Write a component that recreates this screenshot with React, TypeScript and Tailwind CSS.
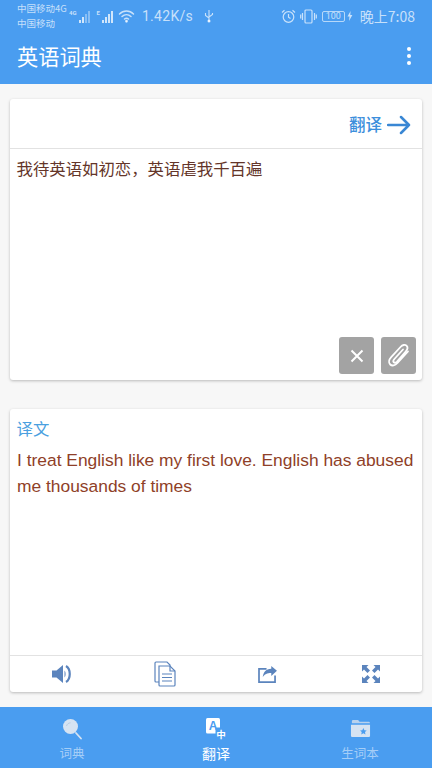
import React from 'react';

const cjk = { fontFamily: '"Noto Sans CJK SC", "Liberation Sans", sans-serif' };

function Bars({ label, faded }: { label: string; faded?: boolean }) {
  const heights = [3, 6, 9, 12];
  return (
    <div className="flex items-end gap-[1.5px] h-[14px]">
      <span className="text-[6px] leading-[8px] self-start font-bold text-white/70 mr-[1px] font-['Roboto',sans-serif]">{label}</span>
      {heights.map((h, i) => (
        <div
          key={i}
          className={i > 1 && faded ? 'w-[1.5px] bg-white/35' : 'w-[1.5px] bg-white/75'}
          style={{ height: h }}
        />
      ))}
    </div>
  );
}

function StatusBar() {
  return (
    <div className="h-[32px] flex items-center justify-between pl-[17px] pr-[17px] text-white/70 font-['Roboto',sans-serif]">
      <div className="flex items-center">
        <div className="text-[9.5px] leading-[15px] w-[50px] whitespace-nowrap" style={cjk}>
          <div>中国移动4G</div>
          <div>中国移动</div>
        </div>
        <div className="ml-[2px]"><Bars label="4G" faded /></div>
        <div className="ml-[7px]"><Bars label="E" /></div>
        <svg className="ml-[5px]" width="17" height="14" viewBox="0 0 16 14" fill="none" stroke="currentColor" strokeWidth="1.5" strokeLinecap="round">
          <path d="M1 5c4-4 10-4 14 0" />
          <path d="M3.5 7.5c2.6-2.5 6.400-2.500 9 0" />
          <path d="M6 10c1.200-1 2.800-1 4 0" />
          <circle cx="8" cy="12.300" r="0.700" fill="currentColor" />
        </svg>
        <span className="ml-[7px] text-[14px] tracking-[0.3px]">1.42K/s</span>
        <svg className="ml-[11px]" width="10" height="14" viewBox="0 0 10 14" fill="none" stroke="currentColor" strokeWidth="1.100">
          <path d="M5 1v12M1.500 4v2.500L5 9M8.500 4v1.500L5 8" />
          <circle cx="5" cy="12" r="1" fill="currentColor" />
        </svg>
      </div>
      <div className="flex items-center">
        <svg width="15" height="15" viewBox="0 0 15 15" fill="none" stroke="currentColor" strokeWidth="1.200">
          <circle cx="7.500" cy="8" r="5.300" />
          <path d="M7.500 5v3.200l2 1.200M1 3.500 3.500 1.200M14 3.500 11.500 1.200" />
        </svg>
        <svg className="ml-[4px]" width="17" height="15" viewBox="0 0 17 15" fill="none" stroke="currentColor" strokeWidth="1.200">
          <rect x="5" y="1" width="7" height="13" rx="1" />
          <path d="M2.500 4v7M0.700 5.500v4M14.500 4v7M16.300 5.500v4" />
        </svg>
        <div className="ml-[5px] w-[23px] h-[11px] border border-white/60 rounded-[2px] text-[9px] leading-[9px] text-center">100</div>
        <svg className="ml-[2px]" width="6" height="10" viewBox="0 0 6 10" fill="currentColor">
          <path d="M3.600 0 .5 5.600h2L2 10l3.400-6H3.300z" />
        </svg>
        <span className="ml-[7px] text-[14px] whitespace-nowrap" style={cjk}>晚上7:08</span>
      </div>
    </div>
  );
}

function TabIcon({ name }: { name: string }) {
  if (name === 'search') {
    return (
      <svg width="20" height="22" viewBox="0 0 20 22" fill="none">
        <circle cx="8.500" cy="8.500" r="7.500" fill="#d6e3f2" />
        <path d="M4.500 8c.6-2 2-3 4-3.200" stroke="#b9cde4" strokeWidth="1" />
        <path d="M14 15l5 5.500" stroke="#d6e3f2" strokeWidth="1.800" strokeLinecap="round" />
      </svg>
    );
  }
  if (name === 'translate') {
    return (
      <svg width="22" height="24" viewBox="0 0 22 24">
        <rect x="1" y="1" width="14" height="15.500" rx="1.500" fill="#fff" />
        <text x="8" y="13" textAnchor="middle" fontSize="12" fontWeight="700" fill="#4a9df0" fontFamily="Liberation Sans">A</text>
        <rect x="10.500" y="10.500" width="10.500" height="11" fill="#4a9df0" />
        <text x="16" y="20.500" textAnchor="middle" fontSize="9.500" fontWeight="700" fill="#fff" fontFamily="Noto Sans CJK SC">中</text>
      </svg>
    );
  }
  return (
    <svg className="-mt-[2px]" width="21" height="20" viewBox="0 0 22 20">
      <path d="M2 3c0-1 .6-1.500 1.500-1.500h5L10 3.500h9.500c.8 0 1.500.7 1.500 1.500H2z" fill="#b9d2ee" />
      <path d="M1 6.500h20V18c0 .8-.7 1.500-1.500 1.500h-17C1.700 19.500 1 18.800 1 18z" fill="#d6e3f2" />
      <path d="m14 10 1.100 2.400 2.400.3-1.800 1.600.5 2.500-2.200-1.300-2.200 1.300.5-2.500-1.800-1.600 2.400-.3z" fill="#4a9df0" />
    </svg>
  );
}

function Tab({ name, label, active }: { name: string; label: string; active?: boolean }) {
  return (
    <div className="flex-1 flex flex-col items-center pt-[10px]">
      <div className="h-[24px] flex items-center justify-center"><TabIcon name={name} /></div>
      <span className={active ? 'text-[14px] leading-[20px] mt-[1.500px] text-white' : 'text-[12.5px] leading-[20px] mt-[2px] text-white/50'}>{label}</span>
    </div>
  );
}

export default function App() {
  return (
    <div className="w-[432px] h-[768px] flex flex-col bg-[#f7f7f7] overflow-hidden" style={cjk}>
      <div className="h-[84px] bg-[#4a9df0] shrink-0">
        <StatusBar />
        <div className="h-[52px] flex items-center justify-between pl-[17px] pr-[21px] pb-[4px]">
          <h1 className="text-[21.200px] leading-[30px] text-white font-normal">英语词典</h1>
          <div className="flex flex-col gap-[2.500px]">
            <div className="w-[4.500px] h-[4.500px] rounded-full bg-white" />
            <div className="w-[4.500px] h-[4.500px] rounded-full bg-white" />
            <div className="w-[4.500px] h-[4.500px] rounded-full bg-white" />
          </div>
        </div>
      </div>

      <div className="flex-1 flex flex-col px-[10px] pt-[15px] pb-[15px]">
        <div className="h-[281px] bg-white rounded-[3px] shadow-[0_1px_3px_rgba(0,0,0,0.25)] flex flex-col">
          <div className="h-[50px] border-b border-[#e2e2e2] flex items-center justify-end pr-[11px] pt-[2px]">
            <span className="text-[16.500px] font-medium text-[#3d8fdc]">翻译</span>
            <svg className="ml-[5px]" width="24" height="20" viewBox="0 0 24 20" fill="none" stroke="#3a87d4" strokeWidth="2.500" strokeLinecap="round" strokeLinejoin="round">
              <path d="M1 10h21M14 2l8 8-8 8" />
            </svg>
          </div>
          <div className="flex-1 flex flex-col justify-between pl-[6.500px] pr-[6px] pb-[6px]">
            <p className="text-[16.400px] leading-[24px] pt-[7px] text-[#643529]">{'我待英语如初恋\uFF0C英语虐我千百遍'}</p>
            <div className="flex justify-end gap-[7px]">
              <div className="w-[35px] h-[37px] rounded-[3px] bg-[#a3a3a3] flex items-center justify-center">
                <svg width="14" height="14" viewBox="0 0 14 14" stroke="#fff" strokeWidth="2">
                  <path d="M1.500 1.500l11 11M12.500 1.500l-11 11" />
                </svg>
              </div>
              <div className="w-[35px] h-[37px] rounded-[3px] bg-[#a3a3a3] flex items-center justify-center">
                <svg width="24" height="26" viewBox="0 0 24 26" fill="none" stroke="#fff" strokeWidth="1.800" strokeLinecap="round">
                  <path d="M21 8.500 10.500 20c-2.500 2.700-5.500 3.200-7.300 1.500-1.800-1.700-1.400-4.700 1-7.300L13.500 4c2-2.200 4.500-2.700 6-1.300 1.500 1.400 1.100 3.700-.8 5.800L10 18.500c-1.100 1.200-2.400 1.500-3.200.8-.8-.8-.5-2.100.6-3.300L16 6.500" />
                </svg>
              </div>
            </div>
          </div>
        </div>

        <div className="mt-[29px] h-[283px] bg-white rounded-[3px] shadow-[0_1px_3px_rgba(0,0,0,0.25)] flex flex-col">
          <div className="flex-1 px-[7px] pt-[6px]">
            <div className="-ml-[0.500px] text-[16.400px] leading-[26px] text-[#4aa0e0]">译文</div>
            <p className="mt-[6px] text-[17.400px] leading-[26px] text-[#8f3f28] font-['Liberation_Sans',sans-serif]">
              I treat English like my first love. English has abused me thousands of times
            </p>
          </div>
          <div className="h-[37px] border-t border-[#e2e2e2] flex items-center shrink-0">
            <div className="flex-1 flex justify-center">
              <svg width="20" height="20" viewBox="0 0 20 20" fill="#5b84bd">
                <path d="M0 6.500h4.500L11 1v18l-6.500-5.500H0z" />
                <path d="M12.500 6.500c1.500 1.500 1.500 5.500 0 7z" />
                <path d="M14 2c5 3 5 13 0 16" fill="none" stroke="#5b84bd" strokeWidth="2.200" />
              </svg>
            </div>
            <div className="flex-1 flex justify-center">
              <svg width="22" height="26" viewBox="0 0 22 26" fill="#fff" stroke="#5b84bd" strokeWidth="1.200">
                <path d="M1 2c0-.6.4-1 1-1h11l3 3v16c0 .6-.4 1-1 1H2c-.6 0-1-.4-1-1z" />
                <path d="M5 5h11l5 5v14c0 .6-.4 1-1 1H6c-.6 0-1-.4-1-1z" />
                <path d="M16 5v5h5M8 13h10M8 16.500h10M8 20h10" fill="none" />
              </svg>
            </div>
            <div className="flex-1 flex justify-center">
              <svg width="19" height="17" viewBox="0 0 20 18" fill="none" stroke="#5b84bd" strokeWidth="1.800">
                <path d="M9 3H1v14h17V10" />
                <path d="M20 5 14 0v3C8 3.200 5.500 7 5 12c2-3.500 4.500-4.500 9-4.500V10.500z" fill="#5b84bd" stroke="none" />
              </svg>
            </div>
            <div className="flex-1 flex justify-center">
              <svg width="18" height="18" viewBox="0 0 18 18" fill="#5b84bd">
                <path d="M0 0h6.500L4.500 2 8 5.500 5.500 8 2 4.500 0 6.500z" />
                <path d="M18 0h-6.500l2 2L10 5.500 12.500 8 16 4.500l2 2z" />
                <path d="M0 18h6.500l-2-2L8 12.500 5.500 10 2 13.500l-2-2z" />
                <path d="M18 18h-6.500l2-2-3.500-3.500 2.500-2.500 3.500 3.500 2-2z" />
              </svg>
            </div>
          </div>
        </div>
      </div>

      <div className="h-[61px] bg-[#4a9df0] flex shrink-0">
        <Tab name="search" label="词典" />
        <Tab name="translate" label="翻译" active />
        <Tab name="folder" label="生词本" />
      </div>
    </div>
  );
}
